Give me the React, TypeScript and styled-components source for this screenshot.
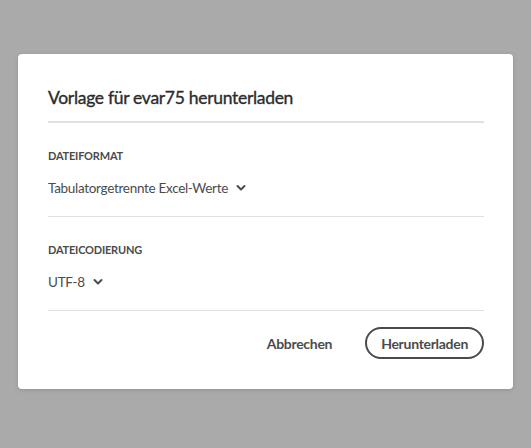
import React from "react";
import styled, { createGlobalStyle } from "styled-components";

const Global = createGlobalStyle`
  html, body { margin: 0; padding: 0; }
  body {
    background: #aaaaaa;
    font-family: Lato, "Open Sans", sans-serif;
    width: 531px;
    height: 448px;
    overflow: hidden;
  }
`;

const Backdrop = styled.div`
  width: 531px;
  height: 448px;
  display: flex;
  justify-content: center;
  padding-top: 54px;
  box-sizing: border-box;
`;

const Dialog = styled.div`
  width: 495px;
  height: 335px;
  box-sizing: border-box;
  background: #ffffff;
  border-radius: 4px;
  box-shadow: 0 1px 4px rgba(0, 0, 0, 0.15);
  padding: 30px 29px 0 30px;
  display: flex;
  flex-direction: column;
`;

const Title = styled.h2`
  margin: 0;
  font-size: 17.5px;
  font-weight: 400;
  -webkit-text-stroke: 0.35px #2c2c2c;
  letter-spacing: -0.3px;
  color: #2c2c2c;
  line-height: 26px;
  padding-top: 1px;
  padding-bottom: 10px;
  border-bottom: 2px solid #e1e1e1;
`;

const Section = styled.div`
  display: flex;
  flex-direction: column;
  padding-top: ${(p: { $top: number }) => p.$top}px;
  padding-bottom: 17px;
  border-bottom: 1px solid #e1e1e1;
`;

const Label = styled.div`
  font-size: 11px;
  font-weight: 700;
  color: #4b4b4b;
  letter-spacing: -0.2px;
  line-height: 16px;
`;

const Picker = styled.div`
  display: flex;
  align-items: center;
  gap: 8px;
  margin-top: 13px;
  font-size: 13.5px;
  letter-spacing: -0.3px;
  color: #4b4b4b;
  line-height: 22px;
`;

const Footer = styled.div`
  display: flex;
  justify-content: flex-end;
  align-items: center;
  gap: 17px;
  padding-top: 16px;
`;

const QuietButton = styled.button`
  background: none;
  border: none;
  font-family: inherit;
  font-size: 14px;
  font-weight: 700;
  letter-spacing: -0.3px;
  color: #4b4b4b;
  padding: 0 16px;
  height: 32px;
`;

const OutlineButton = styled.button`
  background: #fff;
  border: 2px solid #4b4b4b;
  border-radius: 16px;
  font-family: inherit;
  font-size: 14px;
  font-weight: 700;
  letter-spacing: -0.3px;
  color: #4b4b4b;
  height: 32px;
  padding: 0 14px;
  box-sizing: border-box;
`;

const Chevron = () => (
  <svg width="10" height="10" viewBox="0 0 10 10">
    <path d="M1.5 3 L5 6.5 L8.5 3" fill="none" stroke="#4b4b4b" strokeWidth="2" strokeLinecap="round" strokeLinejoin="round" />
  </svg>
);

export default function App() {
  return (
    <>
      <Global />
      <Backdrop>
        <Dialog>
          <Title>Vorlage für evar75 herunterladen</Title>
          <Section $top={25}>
            <Label>DATEIFORMAT</Label>
            <Picker>
              Tabulatorgetrennte Excel-Werte <Chevron />
            </Picker>
          </Section>
          <Section $top={25}>
            <Label>DATEICODIERUNG</Label>
            <Picker>
              UTF-8 <Chevron />
            </Picker>
          </Section>
          <Footer>
            <QuietButton>Abbrechen</QuietButton>
            <OutlineButton>Herunterladen</OutlineButton>
          </Footer>
        </Dialog>
      </Backdrop>
    </>
  );
}
